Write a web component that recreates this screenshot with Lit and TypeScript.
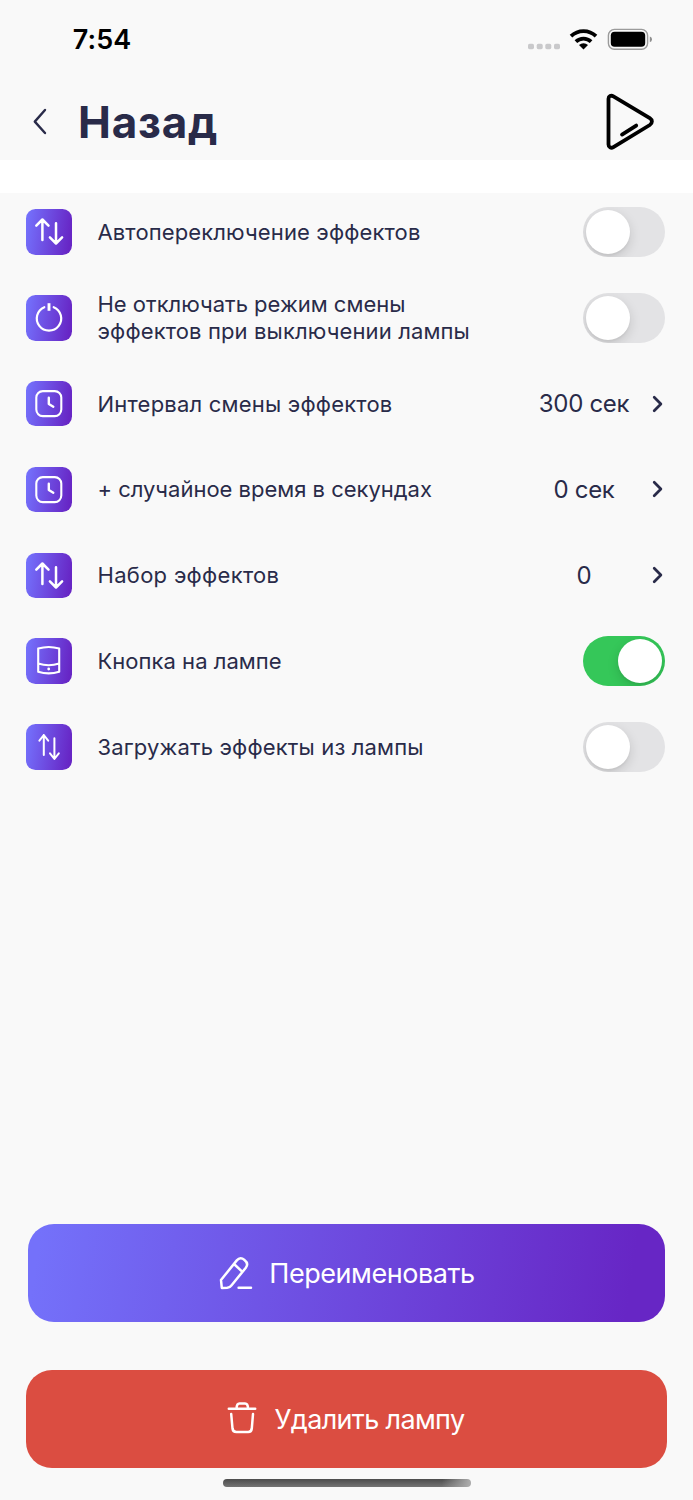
import { LitElement, html, css, svg } from "lit";
import { customElement, property } from "lit/decorators.js";
import { classMap } from "lit/directives/class-map.js";
import { styleMap } from "lit/directives/style-map.js";

const glyphs: Record<string, unknown> = {
  swap: svg`<path d="M16.4 31V11M10.3 16.7L16.4 10.5L22.5 16.7M30 14.3V34M23.9 28.3L30 34.5L36.1 28.3"/>`,
  swapNarrow: svg`<path stroke-width="2" d="M17.8 31V11M13.4 16.6L17.8 11L22.2 16.6M28.4 14.3V34.5M24 29.4L28.4 35L32.8 29.4"/>`,
  power: svg`<path stroke-width="2.2" d="M18.3 12.2A12.2 12.2 0 1 0 27.7 12.2"/><path stroke-width="2.9" stroke-linecap="butt" d="M23 8.2V15.8"/>`,
  clock: svg`<rect x="10.3" y="10.1" width="25" height="25" rx="6.5" stroke-width="2.1"/><path stroke-width="2.4" d="M22.8 16.8V23L27.3 25.7"/>`,
  lamp: svg`<path stroke-width="2.1" d="M12.2 10.6Q22.7 7.4 33.2 10.6V33.8Q22.7 37 12.2 33.8ZM12.2 25.6Q22.7 28.8 33.2 25.6"/><circle cx="22.7" cy="31" r="1.4" fill="#fff" stroke="none"/>`,
};

interface Line {
  text: string;
  tracking: number;
}

interface Setting {
  icon: string;
  lines: Line[];
  value?: string;
  on?: boolean;
}

const settings: Setting[] = [
  { icon: "swap", lines: [{ text: "Автопереключение эффектов", tracking: 0.13 }], on: false },
  {
    icon: "power",
    lines: [
      { text: "Не отключать режим смены", tracking: 0 },
      { text: "эффектов при выключении лампы", tracking: 0.13 },
    ],
    on: false,
  },
  { icon: "clock", lines: [{ text: "Интервал смены эффектов", tracking: 0.21 }], value: "300 сек" },
  { icon: "clock", lines: [{ text: "+ случайное время в секундах", tracking: -0.01 }], value: "0 сек" },
  { icon: "swap", lines: [{ text: "Набор эффектов", tracking: 0.3 }], value: "0" },
  { icon: "lamp", lines: [{ text: "Кнопка на лампе", tracking: 0.03 }], on: true },
  { icon: "swapNarrow", lines: [{ text: "Загружать эффекты из лампы", tracking: 0.15 }], on: false },
];

@customElement("setting-row")
class SettingRow extends LitElement {
  @property({ attribute: false }) setting!: Setting;

  static styles = css`
    :host { display: flex; align-items: center; height: 50px; }
    .tile {
      flex: none; width: 45.5px; height: 45.5px; border-radius: 9.5px;
      background: linear-gradient(98deg, #7471fc 3%, #6726c5 92%);
    }
    .tile svg {
      display: block; width: 45.5px; height: 45.5px; fill: none; stroke: #fff;
      stroke-width: 2.5; stroke-linecap: round; stroke-linejoin: round;
    }
    .label { flex: 1; margin: 0.8px 0 0 26px; font-size: 22px; line-height: 27px; color: #292b49; }
    .line { white-space: nowrap; }
    .value {
      width: 110px; margin: 1px 13px 0 0; text-align: center; letter-spacing: -0.3px;
      font-size: 24px; line-height: 30px; color: #292b49;
    }
    .chevron {
      width: 12px; height: 20px; margin-right: 1px; fill: none; stroke: #292b49;
      stroke-width: 2.7; stroke-linecap: round; stroke-linejoin: round;
    }
    .switch {
      box-sizing: border-box; width: 82.5px; height: 50px; padding: 3px; border-radius: 25px;
      background: #e3e3e5; display: flex; overflow: hidden;
    }
    .switch.on { background: #35c759; justify-content: flex-end; }
    .knob {
      width: 44px; height: 44px; border-radius: 50%; background: #fff;
      box-shadow: 0 4px 12px rgba(0, 0, 0, 0.14), 0 2px 2px rgba(0, 0, 0, 0.04);
    }
  `;

  render() {
    const { icon, lines, value, on } = this.setting;
    return html`
      <div class="tile"><svg viewBox="0 0 45.5 45.5">${glyphs[icon]}</svg></div>
      <div class="label">
        ${lines.map(
          (l) => html`<div class="line" style=${styleMap({ letterSpacing: `${l.tracking}px` })}>${l.text}</div>`
        )}
      </div>
      ${value === undefined
        ? html`<div class=${classMap({ switch: true, on: !!on })}><div class="knob"></div></div>`
        : html`<div class="value">${value}</div>
            <svg class="chevron" viewBox="0 0 12 20"><path d="M2.2 3.2L8.9 10L2.2 16.8" /></svg>`}
    `;
  }
}

@customElement("app-root")
class AppRoot extends LitElement {
  static styles = css`
    :host {
      display: flex; flex-direction: column; height: 1500px; background: #f9f9f9;
      font-family: Inter, "Noto Sans", sans-serif; color: #292b49;
    }
    .status {
      display: flex; align-items: center; height: 80px; box-sizing: border-box;
      padding: 0 41px 0 72.7px;
    }
    .time { flex: 1; font-size: 27px; font-weight: 600; letter-spacing: 0.1px; color: #000; line-height: 34px; }
    .indicators { width: 125px; height: 30px; display: block; }
    .header {
      display: flex; align-items: center; height: 80.4px; box-sizing: border-box;
      padding: 0 37px 0 32px;
    }
    .back { width: 16px; height: 28px; margin-top: 1px; fill: none; stroke: #292b49; stroke-width: 2.4; stroke-linecap: round; stroke-linejoin: round; }
    h1 { flex: 1; margin: 4px 0 0 30px; font-size: 44px; line-height: 54px; font-weight: 700; letter-spacing: 0.8px; }
    .play { width: 54px; height: 62px; margin-top: 3px; fill: none; stroke: #000; stroke-width: 3.8; stroke-linecap: round; stroke-linejoin: round; }
    .band { height: 32.4px; background: #fff; }
    .list {
      flex: 1; display: flex; flex-direction: column; gap: 35.83px;
      padding: 14.2px 28px 0 26px;
    }
    .actions { display: flex; flex-direction: column; gap: 48.5px; padding: 0 26px; }
    .btn {
      display: flex; align-items: center; justify-content: center; height: 97.3px;
      border-radius: 26px; color: #fff; font-size: 27px; line-height: 34px;
    }
    .btn svg { fill: none; stroke: #fff; stroke-width: 2.5; stroke-linecap: round; stroke-linejoin: round; width: 36px; height: 36px; }
    .btn span { margin-left: 15px; }
    .rename { margin: 0 2px; background: linear-gradient(98deg, #7471fa 2%, #6726c5 94%); }
    .rename span { letter-spacing: -0.45px; margin-top: 2px; }
    .remove { background: #db4d41; box-sizing: border-box; padding-right: 5px; }
    .remove span { letter-spacing: -0.65px; margin-top: 2px; }
    .remove svg { margin-top: -5px; }
    .home {
      width: 248px; height: 8px; border-radius: 4px; margin: 11px auto 13.5px;
      background:
        linear-gradient(100deg, rgba(170, 170, 170, 0) 88%, #aaa 99%),
        linear-gradient(#4c4c4c, #747474);
    }
  `;

  render() {
    return html`
      <div class="status">
        <div class="time">7:54</div>
        <svg class="indicators" viewBox="527 25 125 30">
          <g fill="#c9c9cb">
            <rect x="528" y="43.8" width="6" height="5.4" rx="1.6" />
            <rect x="536.7" y="43.8" width="6" height="5.4" rx="1.6" />
            <rect x="545.3" y="43.8" width="6" height="5.4" rx="1.6" />
            <rect x="554" y="43.8" width="6" height="5.4" rx="1.6" />
          </g>
          <g fill="none" stroke="#000" stroke-width="3.7">
            <path d="M571 36.2A18 18 0 0 1 596 36.2" />
            <path d="M575.9 41.6A11 11 0 0 1 591.1 41.6" />
          </g>
          <path d="M583.5 49.6L579 45A6.6 6.6 0 0 1 588 45Z" />
          <rect x="608.4" y="29.4" width="39.2" height="19.8" rx="6" fill="none" stroke="#9b9b9b" stroke-width="1.4" />
          <rect x="610.8" y="31.8" width="34.4" height="15" rx="3.8" />
          <path d="M649.8 36.4Q652 37 652 39.3Q652 41.6 649.8 42.2Z" fill="#8e8e8e" />
        </svg>
      </div>
      <div class="header">
        <svg class="back" viewBox="0 0 16 28"><path d="M13 3L2.8 14.6L13 26" /></svg>
        <h1>Назад</h1>
        <svg class="play" viewBox="602 91 54 62">
          <path d="M608.5 98.8C608.5 96 611 95 613.4 96.4L649.8 118.2C652.6 120 652.6 123.2 649.8 125L613.4 147.2C611 148.6 608.5 147.2 608.5 144.6Z" />
          <path d="M622 134.6L636.2 125.6" />
        </svg>
      </div>
      <div class="band"></div>
      <div class="list">
        ${settings.map((s) => html`<setting-row .setting=${s}></setting-row>`)}
      </div>
      <div class="actions">
        <div class="btn rename">
          <svg viewBox="0 0 36 36">
            <path d="M3 25L18.8 5.4Q22.2 1.4 26.5 5Q31 8.6 27.8 12.8L13.6 30.3Q12 32.6 9.2 32.8L3.8 33ZM16 9L24.4 16.8M20.6 32.7H33" />
          </svg>
          <span>Переименовать</span>
        </div>
        <div class="btn remove">
          <svg viewBox="0 0 36 36">
            <path d="M4.8 10.8H31.2M12.6 10.6Q12.6 5.4 15.5 5.4H21Q24 5.4 24 10.6M7.2 16L8.5 30.5Q8.9 34 12.4 34H24.2Q27.4 34 27.8 30.5L29 16" />
          </svg>
          <span>Удалить лампу</span>
        </div>
      </div>
      <div class="home"></div>
    `;
  }
}
